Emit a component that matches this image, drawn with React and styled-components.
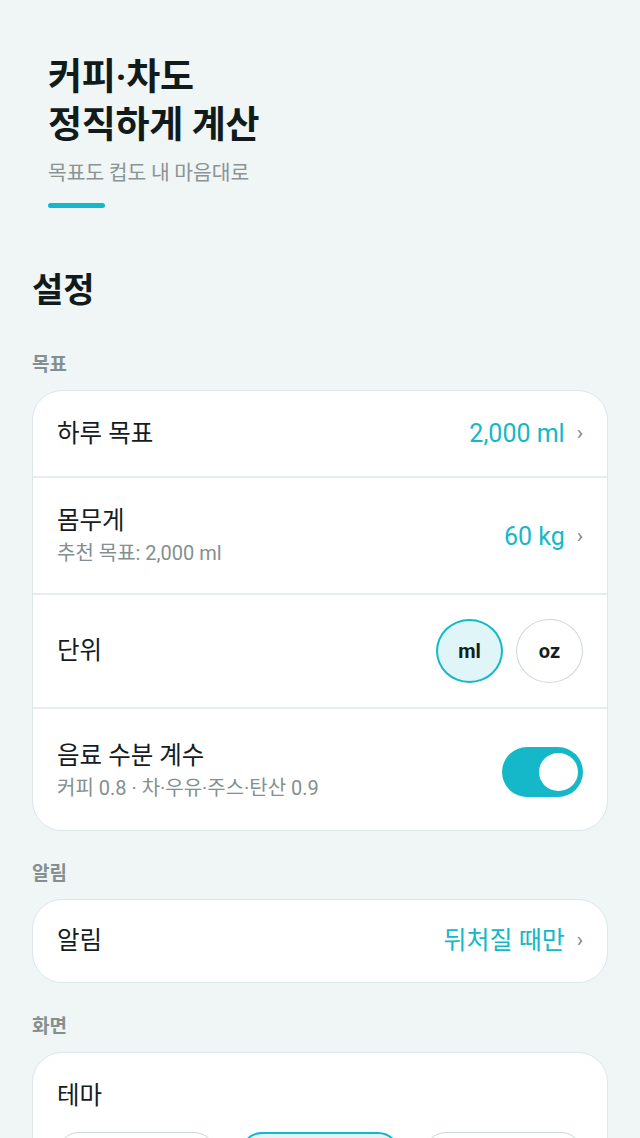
import React from "react";
import styled, { createGlobalStyle } from "styled-components";

const Global = createGlobalStyle`
  html, body { margin: 0; padding: 0; background: #f0f5f5; }
  body { font-family: Roboto, "Noto Sans CJK KR", sans-serif; color: #111a1b; }
  * { box-sizing: border-box; }
`;

const Page = styled.div`
  padding: 0 32px 40px;
  background: #f0f5f5;
  min-height: 1138px;
`;

const Header = styled.header`
  padding: 54px 16px 0;
`;

const Title = styled.h1`
  margin: 0;
  font-family: Roboto, "Noto Sans CJK KR", sans-serif;
  font-weight: 700;
  font-size: 37px;
  line-height: 48px;
  letter-spacing: -0.3px;
  color: #121b1c;
`;

const Subtitle = styled.p`
  margin: 7px 0 0;
  font-family: "Noto Sans CJK KR", sans-serif;
  font-size: 20.4px;
  line-height: 28px;
  color: #8a9494;
`;

const Accent = styled.div`
  margin-top: 18px;
  width: 57px;
  height: 5px;
  border-radius: 3px;
  background: #14b8c8;
`;

const PageTitle = styled.h2`
  margin: 60px 0 0;
  font-family: "Noto Sans CJK KR", sans-serif;
  font-weight: 700;
  font-size: 34px;
  line-height: 40px;
  color: #121b1c;
`;

const SectionLabel = styled.div`
  margin-top: ${(p) => p.$top}px;
  font-family: "Noto Sans CJK KR", sans-serif;
  font-weight: 700;
  font-size: 19px;
  line-height: 24px;
  color: #848f8f;
`;

const Card = styled.div`
  margin-top: 15px;
  background: #fff;
  border: 1px solid #dbe7e8;
  border-radius: 30px;
  overflow: hidden;
`;

const Row = styled.div`
  display: flex;
  align-items: center;
  justify-content: space-between;
  padding: ${(p) => p.$pt}px 24px ${(p) => p.$pb}px;
  & + & {
    border-top: 2px solid #e3eeef;
  }
`;

const TextBlock = styled.div`
  display: flex;
  flex-direction: column;
`;

const Label = styled.div`
  font-family: Roboto, "Noto Sans CJK KR", sans-serif;
  font-size: 24.5px;
  line-height: 32px;
  color: #141c1d;
`;

const Sub = styled.div`
  margin-top: 1px;
  font-family: Roboto, "Noto Sans CJK KR", sans-serif;
  font-size: 20px;
  line-height: 30px;
  color: #848f8f;
`;

const Value = styled.div`
  display: flex;
  align-items: center;
  gap: 12px;
  font-family: Roboto, "Noto Sans CJK KR", sans-serif;
  font-size: 25px;
  line-height: 32px;
  color: #14b8c8;
`;

const Chevron = styled.span`
  font-size: 21px;
  line-height: 32px;
  color: #7c8787;
  transform: translateY(-1px);
`;

const UnitGroup = styled.div`
  display: flex;
  gap: 13px;
`;

const UnitBtn = styled.div`
  width: 67px;
  height: 64px;
  border-radius: 50%;
  display: flex;
  align-items: center;
  justify-content: center;
  font-family: Roboto, sans-serif;
  font-weight: 700;
  font-size: 20px;
  color: #151d1e;
  background: ${(p) => (p.$active ? "#dff5f7" : "#fff")};
  border: ${(p) => (p.$active ? "2px solid #14b8c8" : "1.5px solid #cdd7d7")};
`;

const Toggle = styled.div`
  width: 81px;
  height: 50px;
  border-radius: 25px;
  background: #14b8c8;
  display: flex;
  align-items: center;
  justify-content: flex-end;
  padding-right: 5px;
`;

const Knob = styled.div`
  width: 39px;
  height: 38px;
  border-radius: 50%;
  background: #fff;
`;

const ThemeBody = styled.div`
  padding: 27px 24px 24px;
`;

const ThemeGrid = styled.div`
  margin-top: 20px;
  display: grid;
  grid-template-columns: repeat(3, 1fr);
  gap: 24px;
`;

const ThemeBtn = styled.div`
  height: 56px;
  border-radius: 22px;
  display: flex;
  align-items: center;
  justify-content: center;
  font-family: "Noto Sans CJK KR", sans-serif;
  font-size: 18px;
  color: ${(p) => (p.$active ? "#0f9fae" : "#141c1d")};
  background: ${(p) => (p.$active ? "#dff5f7" : "#fff")};
  border: ${(p) => (p.$active ? "2px solid #14b8c8" : "1.5px solid #cdd7d7")};
`;

export default function App() {
  return (
    <>
      <Global />
      <Page>
        <Header>
          <Title>
            커피·차도
            <br />
            정직하게 계산
          </Title>
          <Subtitle>목표도 컵도 내 마음대로</Subtitle>
          <Accent />
        </Header>

        <PageTitle>설정</PageTitle>

        <SectionLabel $top={43}>목표</SectionLabel>
        <Card>
          <Row $pt={27} $pb={26}>
            <Label>하루 목표</Label>
            <Value>
              2,000 ml <Chevron>›</Chevron>
            </Value>
          </Row>
          <Row $pt={27} $pb={25}>
            <TextBlock>
              <Label>몸무게</Label>
              <Sub>추천 목표: 2,000 ml</Sub>
            </TextBlock>
            <Value>
              60 kg <Chevron>›</Chevron>
            </Value>
          </Row>
          <Row $pt={24} $pb={24}>
            <Label>단위</Label>
            <UnitGroup>
              <UnitBtn $active>ml</UnitBtn>
              <UnitBtn>oz</UnitBtn>
            </UnitGroup>
          </Row>
          <Row $pt={31} $pb={27}>
            <TextBlock>
              <Label>음료 수분 계수</Label>
              <Sub>커피 0.8 · 차·우유·주스·탄산 0.9</Sub>
            </TextBlock>
            <Toggle>
              <Knob />
            </Toggle>
          </Row>
        </Card>

        <SectionLabel $top={29}>알림</SectionLabel>
        <Card>
          <Row $pt={25} $pb={25}>
            <Label>알림</Label>
            <Value>
              뒤처질 때만 <Chevron>›</Chevron>
            </Value>
          </Row>
        </Card>

        <SectionLabel $top={30}>화면</SectionLabel>
        <Card>
          <ThemeBody>
            <Label>테마</Label>
            <ThemeGrid>
              <ThemeBtn>시스템</ThemeBtn>
              <ThemeBtn $active>라이트</ThemeBtn>
              <ThemeBtn>다크</ThemeBtn>
            </ThemeGrid>
          </ThemeBody>
        </Card>
      </Page>
    </>
  );
}
